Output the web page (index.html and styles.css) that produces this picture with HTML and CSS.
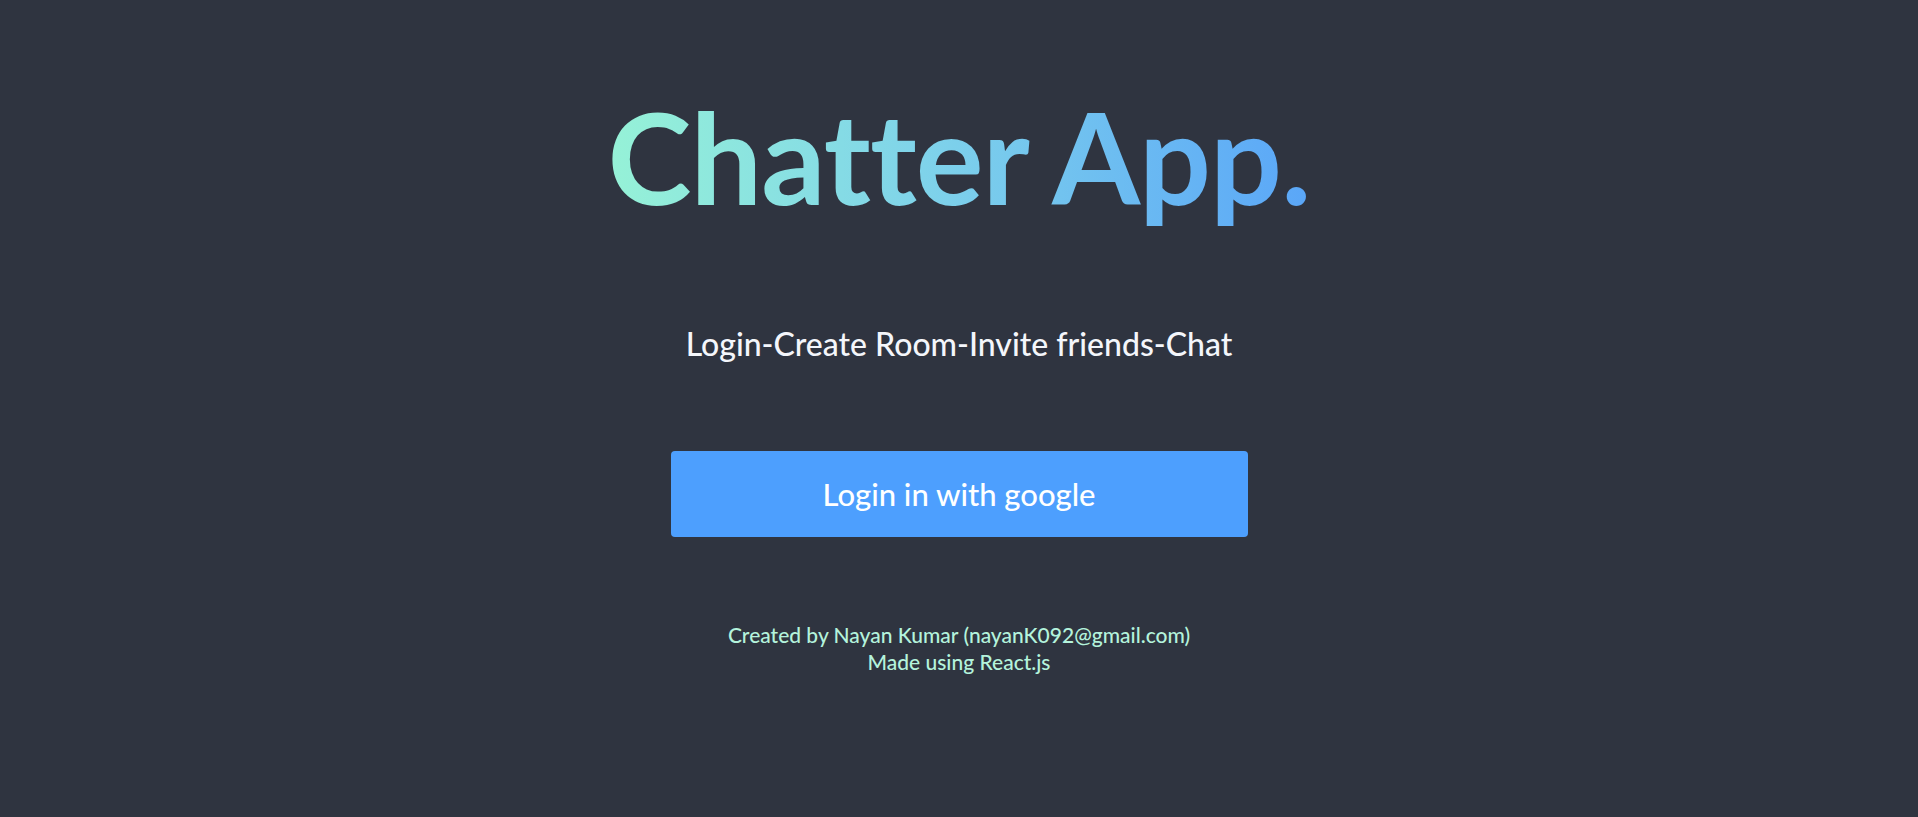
FILE: index.html
```html
<!DOCTYPE html>
<html lang="en">
<head>
<meta charset="utf-8">
<title>Chatter App</title>
<link rel="stylesheet" href="styles.css">
</head>
<body>
<main class="home">
  <h1 class="title">Chatter App.</h1>
  <p class="tagline">Login-Create Room-Invite friends-Chat</p>
  <button class="login-btn" type="button">Login in with google</button>
  <footer class="credits">
    <div>Created by Nayan Kumar (nayanK092@gmail.com)</div>
    <div>Made using React.js</div>
  </footer>
</main>
</body>
</html>
```

FILE: styles.css
```css
html, body {
  margin: 0;
  padding: 0;
  height: 100%;
}
body {
  background: #2f3440;
  font-family: Lato, "Open Sans", sans-serif;
  color: #ffffff;
}
.home {
  display: flex;
  flex-direction: column;
  align-items: center;
  text-align: center;
  padding-top: 80px;
}
.title {
  margin: 0;
  font-size: 127px;
  font-weight: 700;
  line-height: 1.2;
  letter-spacing: -1px;
  background: linear-gradient(90deg, #96f2d7 0%, #7fd3ea 45%, #5aa6f8 100%);
  -webkit-background-clip: text;
  background-clip: text;
  color: transparent;
}
.tagline {
  margin: 92px 0 0;
  font-size: 32px;
  font-weight: 500;
  color: #f4f6fb;
}
.login-btn {
  margin-top: 88px;
  width: 577px;
  height: 86px;
  border: none;
  border-radius: 4px;
  background: #4d9ffe;
  color: #ffffff;
  font-family: inherit;
  font-size: 31px;
  font-weight: 500;
  cursor: pointer;
}
.credits {
  margin-top: 84px;
  font-size: 21px;
  font-weight: 500;
  line-height: 27px;
  color: #b4f3dc;
}
```
